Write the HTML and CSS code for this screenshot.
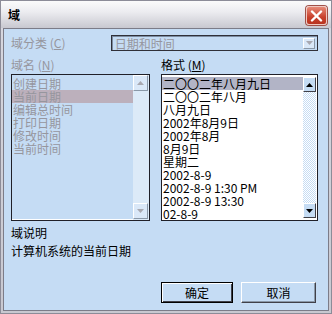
FILE: index.html
```html
<!DOCTYPE html>
<html>
<head>
<meta charset="utf-8">
<link rel="stylesheet" href="styles.css">
</head>
<body>
<div class="window">
  <div class="titlebar">
    <span class="title">域</span>
    <span class="close"><svg width="13" height="12" viewBox="0 0 13 12"><path d="M2 1.5 L11 10.5 M11 1.5 L2 10.5" stroke="#fff" stroke-width="2.4" stroke-linecap="round"/></svg></span>
  </div>
  <div class="client">
    <div class="row1">
      <span class="label dis">域分类 (<u>C</u>)</span>
      <div class="combo">
        <span class="combo-text">日期和时间</span>
        <span class="sbtn combo-btn"><svg width="7" height="4" viewBox="0 0 7 4"><path d="M0 0 H7 L3.5 4 Z" fill="#a8a8b0"/></svg></span>
      </div>
    </div>
    <div class="cols">
      <div class="col col-left">
        <div class="label dis">域名 (<u>N</u>)</div>
        <div class="list list-dis">
          <div class="items">
            <div class="item">创建日期</div>
            <div class="item sel-dis">当前日期</div>
            <div class="item">编辑总时间</div>
            <div class="item">打印日期</div>
            <div class="item">修改时间</div>
            <div class="item">当前时间</div>
          </div>
          <div class="vscroll vscroll-dis">
            <span class="sbtn"><svg width="7" height="4" viewBox="0 0 7 4"><path d="M3.5 0 L7 4 H0 Z" fill="#a8a8b0"/></svg></span>
            <span class="track"></span>
            <span class="sbtn"><svg width="7" height="4" viewBox="0 0 7 4"><path d="M0 0 H7 L3.5 4 Z" fill="#a8a8b0"/></svg></span>
          </div>
        </div>
      </div>
      <div class="col col-right">
        <div class="label">格式 (<u>M</u>)</div>
        <div class="list list-en">
          <div class="items">
            <div class="item sel">二〇〇二年八月九日</div>
            <div class="item">二〇〇二年八月</div>
            <div class="item">八月九日</div>
            <div class="item">2002年8月9日</div>
            <div class="item">2002年8月</div>
            <div class="item">8月9日</div>
            <div class="item">星期二</div>
            <div class="item">2002-8-9</div>
            <div class="item">2002-8-9 1:30 PM</div>
            <div class="item">2002-8-9 13:30</div>
            <div class="item">02-8-9</div>
          </div>
          <div class="vscroll vscroll-en">
            <span class="sbtn sbtn-en"><svg width="7" height="4" viewBox="0 0 7 4"><path d="M3.5 0 L7 4 H0 Z" fill="#000"/></svg></span>
            <span class="track track-en"></span>
            <span class="sbtn sbtn-en"><svg width="7" height="4" viewBox="0 0 7 4"><path d="M0 0 H7 L3.5 4 Z" fill="#000"/></svg></span>
          </div>
        </div>
      </div>
    </div>
    <div class="desc-title">域说明</div>
    <div class="desc">计算机系统的当前日期</div>
    <div class="buttons">
      <span class="btn btn-default">确定</span>
      <span class="btn">取消</span>
    </div>
  </div>
</div>
</body>
</html>
```

FILE: styles.css
```css
html, body {
  margin: 0;
  padding: 0;
  background: #c5dcf4;
}
body {
  font-family: "Noto Sans CJK SC", "Noto Sans", sans-serif;
  font-size: 12px;
  color: #000;
}
.window {
  width: 332px;
  height: 314px;
  box-sizing: border-box;
  display: flex;
  flex-direction: column;
  background: linear-gradient(#d8d8e0, #c8c8d0);
  border: 1px solid #8c8c98;
}
.titlebar {
  height: 27px;
  flex: none;
  box-sizing: border-box;
  display: flex;
  align-items: center;
  justify-content: space-between;
  padding: 0 4px 0 7px;
  background: linear-gradient(#fbfbfb 0%, #ececf0 40%, #c8c8d0 100%);
}
.title {
  font-weight: bold;
  font-size: 12px;
  line-height: 14px;
}
.close {
  width: 21px;
  height: 19px;
  margin-top: 2px;
  box-sizing: border-box;
  border-radius: 3px;
  border: 1px solid #f0c8c0;
  background: linear-gradient(#e68a78, #c8402c 60%, #b83420);
  box-shadow: 0 0 0 1px #a05048;
  display: flex;
  align-items: center;
  justify-content: center;
}
.client {
  flex: 1;
  margin: 0 2px 2px 2px;
  border: 1px solid #7c7c88;
  background: #c5dcf4;
  display: flex;
  flex-direction: column;
  padding: 6px 10px 7px 7px;
  line-height: 13px;
}
.label {
  line-height: 14px;
  white-space: nowrap;
}
.dis {
  color: #96969e;
}
.row1 {
  display: flex;
  align-items: center;
  height: 16px;
}
.row1 .label {
  width: 100px;
}
.combo {
  width: 208px;
  height: 16px;
  box-sizing: border-box;
  border: 1px solid #303038;
  box-shadow: inset 1px 1px 0 #7c8ca0;
  display: flex;
  align-items: center;
  justify-content: space-between;
  padding: 0 2px 0 3px;
  color: #96969e;
}
.sbtn {
  width: 13px;
  height: 12px;
  box-sizing: border-box;
  display: flex;
  align-items: center;
  justify-content: center;
  background: #dae8f8;
  border: 1px solid;
  border-color: #ffffff #8a98a8 #8a98a8 #ffffff;
}
.combo-btn {
  width: 12px;
  height: 11px;
}
.cols {
  display: flex;
  gap: 11px;
  margin-top: 7px;
}
.col-left {
  width: 139px;
}
.col-right {
  width: 157px;
}
.list {
  margin-top: 2px;
  height: 147px;
  box-sizing: border-box;
  border: 1px solid #202028;
  box-shadow: inset -1px -1px 0 #ffffff;
  display: flex;
}
.list-dis {
  background: #c5dcf4;
  color: #96969e;
}
.list-en {
  background: #ffffff;
}
.items {
  flex: 1;
  padding-top: 2px;
  overflow: hidden;
}
.item {
  height: 13px;
  line-height: 13px;
  padding-left: 1px;
  white-space: nowrap;
}
.sel-dis {
  background: #bcb0bc;
}
.sel {
  background: #b2b4c6;
}
.vscroll {
  width: 16px;
  display: flex;
  flex-direction: column;
  padding: 0 1px 1px 0;
  box-sizing: border-box;
}
.vscroll .sbtn {
  width: 15px;
  height: 16px;
}
.vscroll-dis {
  background: #dceaf8;
}
.track {
  flex: 1;
}
.vscroll-en {
  width: 14px;
  padding: 2px 1px 2px 0;
}
.sbtn-en {
  width: 13px !important;
  height: 15px !important;
  border-color: #ffffff #404048 #404048 #ffffff;
  background: #c5dcf4;
}
.track-en {
  background: repeating-conic-gradient(#c5dcf4 0 25%, #ffffff 0 50%) 0 0 / 2px 2px;
}
.desc-title {
  margin-top: 5px;
}
.desc {
  margin-top: 5px;
}
.buttons {
  margin-top: auto;
  display: flex;
  justify-content: flex-end;
  gap: 8px;
  padding-right: 2px;
}
.btn {
  width: 75px;
  height: 21px;
  box-sizing: border-box;
  display: flex;
  align-items: center;
  justify-content: center;
  font-size: 12px;
  border: 1px solid;
  border-color: #ffffff #404048 #404048 #ffffff;
  box-shadow: inset -1px -1px 0 #8a98a8;
  background: #c5dcf4;
}
.btn-default {
  width: 72px;
  border: 1px solid #000;
  box-shadow: inset 1px 1px 0 #ffffff, inset -1px -1px 0 #404048;
}
```
